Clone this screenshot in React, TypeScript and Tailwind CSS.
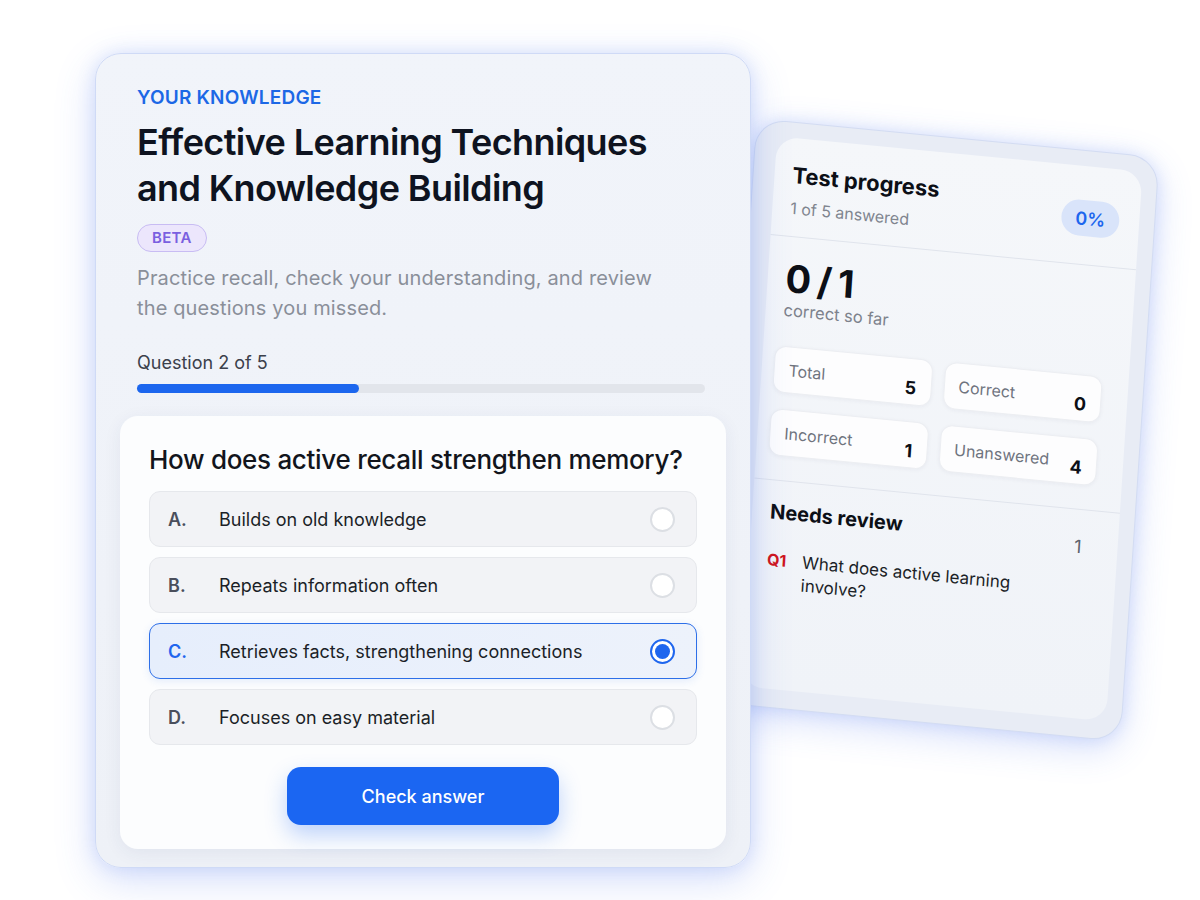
import React from "react";

const FONT = { fontFamily: "Inter, 'Noto Sans', sans-serif" };

const options = [
  { key: "A", text: "Builds on old knowledge" },
  { key: "B", text: "Repeats information often" },
  { key: "C", text: "Retrieves facts, strengthening connections", selected: true },
  { key: "D", text: "Focuses on easy material" },
];

const stats = [
  { label: "Total", value: 5 },
  { label: "Correct", value: 0 },
  { label: "Incorrect", value: 1 },
  { label: "Unanswered", value: 4 },
];

function Radio({ checked }: { checked?: boolean }) {
  if (checked) {
    return (
      <span className="flex h-[25px] w-[25px] items-center justify-center rounded-full border-2 border-[#1f66ee] bg-white">
        <span className="h-[15px] w-[15px] rounded-full bg-[#1f66ee]" />
      </span>
    );
  }
  return <span className="h-[25px] w-[25px] rounded-full border-2 border-[#dcdfe4] bg-white" />;
}

function QuizCard() {
  return (
    <div className="relative z-10 flex h-[815px] w-[656px] shrink-0 flex-col rounded-[26px] border border-[#cfdaf6] bg-gradient-to-b from-[#f1f4fa] to-[#eef1f7] shadow-[0_12px_40px_rgba(70,110,235,0.22),0_0_18px_rgba(90,130,240,0.18)]">
      <div className="px-[41px] pr-[45px] pt-[32px]">
        <div className="text-[19px] font-semibold leading-[24px] tracking-[0.2px] text-[#1c68e6]">YOUR KNOWLEDGE</div>
        <h1 className="mt-[9px] text-[36px] font-semibold leading-[46px] tracking-[-0.6px] text-[#0e1320]">
          Effective Learning Techniques
          <br />
          and Knowledge Building
        </h1>
        <div className="mt-[13px] flex">
          <span className="flex h-[28px] items-center rounded-full border border-[#c8bcf3] bg-[#ece6fc] px-[14px] text-[15px] font-semibold tracking-[0.3px] text-[#7a5fe0]">
            BETA
          </span>
        </div>
        <p className="mt-[11px] max-w-[540px] text-[20px] leading-[30px] tracking-[0.14px] text-[#8a8f99]">
          Practice recall, check your understanding, and review the questions you missed.
        </p>
        <div className="mt-[28px] text-[18px] leading-[24px] text-[#3b404b]">Question 2 of 5</div>
        <div className="mt-[9px] h-[9px] w-full rounded-full bg-[#e2e5eb]">
          <div className="h-full w-[39%] rounded-full bg-[#1c66ee]" />
        </div>
      </div>

      <div className="mx-[24px] mb-[19px] mt-[23px] flex flex-1 flex-col rounded-[18px] bg-[#fcfdfe] px-[29px] pb-[24px] pt-[27px] shadow-[0_4px_18px_rgba(40,60,110,0.07)]">
        <h2 className="text-[26px] font-medium leading-[34px] tracking-[-0.3px] text-[#12151c]">
          How does active recall strengthen memory?
        </h2>
        <div className="mt-[14px] flex flex-col gap-[10px]">
          {options.map((o) => (
            <div
              key={o.key}
              className={
                o.selected
                  ? "flex h-[56px] items-center rounded-[11px] border-[1.5px] border-[#2d6fe8] bg-gradient-to-r from-[#e6eefc] to-[#edf2fb] pl-[18px] pr-[21px] shadow-[0_2px_8px_rgba(45,111,232,0.12)]"
                  : "flex h-[56px] items-center rounded-[11px] border border-[#e6e8ec] bg-[#f2f3f6] pl-[18px] pr-[21px]"
              }
            >
              <span
                className={
                  o.selected
                    ? "w-[51px] text-[18px] font-semibold text-[#1f66ee]"
                    : "w-[51px] text-[18px] font-semibold text-[#4a4f5c]"
                }
              >
                {o.key}.
              </span>
              <span className="flex-1 text-[18px] text-[#1b1f27]">{o.text}</span>
              <Radio checked={o.selected} />
            </div>
          ))}
        </div>
        <div className="mt-[22px] flex justify-center">
          <button className="h-[58px] w-[272px] rounded-[14px] bg-[#1b66f2] text-[18px] font-medium text-white shadow-[0_10px_22px_rgba(27,102,242,0.28)]">
            Check answer
          </button>
        </div>
      </div>
    </div>
  );
}

function ProgressCard() {
  return (
    <div className="relative z-0 -ml-[15px] mt-[84px] h-[586px] w-[405px] shrink-0 rounded-[30px] border border-[#d3dcf2] bg-[#e8ecf5] pb-[18px] pl-[21px] pr-[15px] pt-[15px] shadow-[0_10px_36px_rgba(70,110,235,0.22),0_0_16px_rgba(90,130,240,0.18)] [transform:rotate(3.8deg)_skewY(1.7deg)]">
      <div className="flex h-full flex-col rounded-[22px] bg-gradient-to-b from-[#f5f7fa] to-[#f0f3f8]">
        <div className="flex items-center justify-between pb-[17px] pl-[18px] pr-[20px] pt-[23px]">
          <div>
            <div className="text-[22px] font-bold leading-[28px] text-[#0c0f16]">Test progress</div>
            <div className="mt-[8px] text-[16px] leading-[22px] text-[#80858f]">1 of 5 answered</div>
          </div>
          <span className="flex h-[36px] w-[58px] items-center justify-center rounded-full bg-[#d9e4fa] text-[18px] font-semibold text-[#1c66ee]">
            0%
          </span>
        </div>
        <div className="border-t border-[#e0e4ec] pb-[24px] pl-[18px] pr-[22px] pt-[21px]">
          <div className="text-[38px] font-bold leading-[40px] tracking-[-1.5px] text-[#0c0f16]">0 / 1</div>
          <div className="mt-[2px] text-[16.5px] leading-[20px] text-[#7d828c]">correct so far</div>
          <div className="-ml-[6px] mr-[4px] mt-[26px] grid grid-cols-2 gap-x-[12px] gap-y-[16px]">
            {stats.map((s) => (
              <div
                key={s.label}
                className="flex h-[47px] items-center justify-between rounded-[12px] border border-[#eceef2] bg-[#fdfdfe] px-[14px] shadow-[0_1px_4px_rgba(30,40,70,0.05)]"
              >
                <span className="text-[16px] text-[#6f747e]">{s.label}</span>
                <span className="mt-[12px] text-[18px] font-bold text-[#0c0f16]">{s.value}</span>
              </div>
            ))}
          </div>
        </div>
        <div className="border-t border-[#e0e4ec] pl-[18px] pr-[36px] pt-[17px]">
          <div className="flex items-start justify-between">
            <div className="text-[20px] font-bold leading-[28px] text-[#0c0f16]">Needs review</div>
            <div className="pt-[9px] text-[18px] leading-[22px] text-[#5d626c]">1</div>
          </div>
          <div className="mt-[20px] flex gap-[16px]">
            <span className="text-[16px] font-bold leading-[22px] text-[#d0141c]">Q1</span>
            <span className="max-w-[230px] text-[17px] leading-[23px] text-[#1b1f27]">
              What does active learning involve?
            </span>
          </div>
        </div>
      </div>
    </div>
  );
}

export default function App() {
  return (
    <div className="flex min-h-[900px] items-start bg-white pl-[95px] pt-[53px]" style={FONT}>
      <QuizCard />
      <ProgressCard />
    </div>
  );
}
